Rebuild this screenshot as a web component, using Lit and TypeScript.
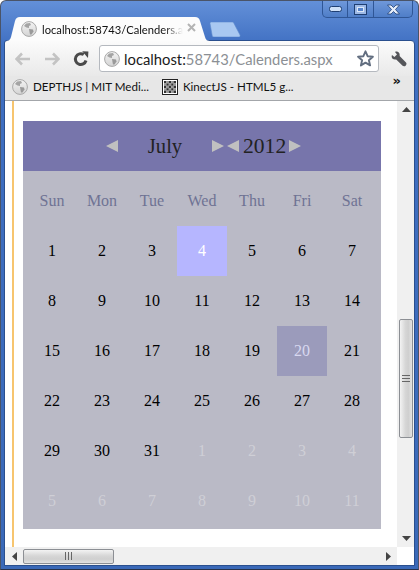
import { LitElement, html, css, svg } from 'lit';
import { customElement } from 'lit/decorators.js';

const globe = (size: number) => html`
  <svg class="globe" width=${size} height=${size} viewBox="0 0 16 16">
    <defs>
      <linearGradient id="gl" x1="0" y1="0" x2="0" y2="1">
        <stop offset="0" stop-color="#f4f4f4" />
        <stop offset="1" stop-color="#d4d4d4" />
      </linearGradient>
    </defs>
    <circle cx="8" cy="8" r="7.4" fill="url(#gl)" stroke="#a9a9a9" stroke-width="1" />
    <path d="M5 2.5 L9 2 L10 4 L8 5 L8 7 L5.5 6.5 L3 5 Z" fill="#a4a4a4" />
    <path d="M8 8 L12 8.5 L12.5 10.5 L10.5 13.5 L9 13.5 L8.5 11 Z" fill="#9a9a9a" />
  </svg>
`;

const triangle = (dir: 'l' | 'r') => html`
  <svg class="tri" width="12" height="12" viewBox="0 0 12 12">
    <path d=${dir === 'l' ? 'M0 6 L12 0 L12 12 Z' : 'M12 6 L0 0 L0 12 Z'} fill="#c0c0c0" />
  </svg>
`;

const arrow = (dir: 'l' | 'r') => html`
  <svg width="16" height="14" viewBox="0 0 16 14">
    <path
      d=${dir === 'l' ? 'M7 1.5 L1.5 7 L7 12.5 M2 7 L15 7' : 'M9 1.5 L14.5 7 L9 12.5 M14 7 L1 7'}
      fill="none"
      stroke="#c3c3c3"
      stroke-width="2.6"
    />
  </svg>
`;

interface Day {
  n: number;
  cls?: string;
}

const days: Day[] = [];
for (let i = 1; i <= 31; i++) {
  days.push({ n: i, cls: i === 4 ? 'today' : i === 20 ? 'picked' : '' });
}
for (let i = 1; i <= 11; i++) days.push({ n: i, cls: 'other' });

const names = ['Sun', 'Mon', 'Tue', 'Wed', 'Thu', 'Fri', 'Sat'];

@customElement('app-root')
export class AppRoot extends LitElement {
  static styles = css`
    :host {
      display: block;
      width: 419px;
      height: 570px;
      overflow: hidden;
    }
    .frame {
      box-sizing: border-box;
      width: 419px;
      height: 570px;
      display: flex;
      flex-direction: column;
      padding: 0 4px 4px 4px;
      border: 1px solid #4a5468;
      border-bottom-color: #27324a;
      border-radius: 6px 6px 0 0;
      background: linear-gradient(#6390d8 0, #3f6fc2 45px, #3a69b8 100%);
      font-family: 'Lato', 'Noto Sans', sans-serif;
    }
    .titlebar {
      height: 40px;
      margin: 0 -4px 0 -4px;
      display: flex;
      align-items: flex-end;
      padding-left: 4px;
      position: relative;
      flex: none;
    }
    .tab {
      position: relative;
      width: 206px;
      height: 24px;
      display: flex;
      align-items: center;
      padding-left: 10px;
      box-sizing: border-box;
      gap: 5px;
    }
    .tab-shape {
      position: absolute;
      left: 0;
      top: 0;
    }
    .tab .globe {
      position: relative;
      margin-left: 6px;
      flex: none;
    }
    .tab-label {
      position: relative;
      font-size: 11.2px;
      color: #111;
      width: 141px;
      flex: none;
      white-space: nowrap;
      overflow: hidden;
      -webkit-mask-image: linear-gradient(90deg, #000 122px, transparent 141px);
      mask-image: linear-gradient(90deg, #000 122px, transparent 141px);
    }
    .tab-close {
      position: absolute;
      left: 182px;
      top: 6px;
    }
    .newtab {
      margin: 0 0 4px -2px;
      flex: none;
    }
    .winbtns {
      position: absolute;
      top: 0;
      left: 321px;
      width: 91px;
      height: 17px;
      box-sizing: border-box;
      display: flex;
      border: 1px solid #2f5696;
      border-top: 0;
      border-radius: 0 0 5px 5px;
      background: linear-gradient(#6f98da, #4f7ec8);
    }
    .winbtns div {
      display: flex;
      align-items: center;
      justify-content: center;
      border-right: 1px solid #2f5696;
      box-sizing: border-box;
    }
    .winbtns div:last-child {
      border-right: 0;
      flex: 1;
    }
    .panel {
      flex: 1;
      display: flex;
      flex-direction: column;
      min-height: 0;
      background: #fff;
      border-radius: 2px 3px 0 0;
      outline: 1px solid #2a4f8e;
    }
    .toolbar {
      height: 35px;
      flex: none;
      display: flex;
      align-items: center;
      padding-left: 10px;
      background: linear-gradient(#fbfbfb, #e9e9e9);
      box-sizing: border-box;
    }
    .toolbar .nav {
      width: 29px;
      display: flex;
    }
    .omnibox {
      box-sizing: border-box;
      margin-left: -3px;
      width: 280px;
      height: 27px;
      background: #fff;
      border: 1px solid #b5b9bf;
      border-radius: 3px;
      display: flex;
      align-items: center;
      padding-left: 4px;
      gap: 4px;
      font-size: 14.8px;
      white-space: nowrap;
      position: relative;
    }
    .omnibox b {
      font-weight: 400;
      color: #1a1a1a;
    }
    .omnibox span {
      color: #8b8f94;
    }
    .star {
      position: absolute;
      right: 4px;
      top: 4px;
    }
    .wrench {
      margin-left: 12px;
    }
    .bookmarks {
      height: 25px;
      flex: none;
      display: flex;
      align-items: center;
      background: #e7e7e7;
      border-bottom: 1px solid #a3a6aa;
      box-sizing: border-box;
      font-size: 11.6px;
      color: #111;
      padding: 0 0 3px 7px;
      white-space: nowrap;
      position: relative;
    }
    .mark {
      display: flex;
      align-items: center;
      gap: 5px;
    }
    .mark + .mark {
      margin-left: 13px;
    }
    .chev {
      position: absolute;
      right: 13px;
      top: 0;
      font-size: 13px;
      font-weight: 700;
      font-family: 'DejaVu Sans', sans-serif;
      line-height: 10px;
    }
    .page {
      flex: 1;
      display: flex;
      min-height: 0;
    }
    .content {
      width: 392px;
      flex: none;
      padding-left: 7px;
      box-sizing: border-box;
      display: flex;
      overflow: hidden;
    }
    .rule {
      width: 2px;
      flex: none;
      background: #f7c56f;
    }
    .calendar {
      margin: 20px 0 0 9px;
      width: 358px;
      height: 408px;
      flex: none;
      background: #babac6;
      font-family: 'Liberation Serif', serif;
    }
    .cal-head {
      height: 50px;
      background: #7775ab;
      display: flex;
      align-items: center;
      padding-left: 83px;
      color: #222;
      font-size: 21.6px;
    }
    .month {
      width: 94px;
      text-align: center;
      font-size: 20.6px;
    }
    .year {
      padding: 0 3px 0 4px;
    }
    .tri {
      flex: none;
    }
    .tri + .tri {
      margin-left: 3px;
    }
    .grid {
      display: grid;
      grid-template-columns: repeat(7, 50px);
      grid-template-rows: 55px;
      grid-auto-rows: 50px;
      padding: 0 4px;
      font-size: 16px;
      color: #000;
    }
    .grid > div {
      display: flex;
      align-items: center;
      justify-content: center;
    }
    .grid .dow {
      color: #6f7394;
      padding-top: 5px;
      box-sizing: border-box;
    }
    .today {
      background: #b6b6ff;
      color: #fff;
    }
    .picked {
      background: #9b9bbb;
      color: #d8d8f0;
    }
    .other {
      color: #cfcfd6;
    }
    .vscroll {
      width: 18px;
      flex: none;
      background: #f0f0f0;
      display: flex;
      flex-direction: column;
      align-items: center;
    }
    .sb-arrow {
      height: 17px;
      flex: none;
      display: flex;
      align-items: center;
      justify-content: center;
    }
    .vthumb {
      margin-top: 201px;
      width: 14px;
      height: 119px;
      box-sizing: border-box;
      border: 1px solid #8c8f94;
      border-radius: 2px;
      background: linear-gradient(90deg, #f3f3f3, #d6d6d6 45%, #cfcfcf 70%, #e2e2e2);
      display: flex;
      align-items: center;
      justify-content: center;
    }
    .vspace {
      flex: 1;
    }
    .hscroll {
      height: 18px;
      flex: none;
      display: flex;
      background: #fff;
    }
    .htrack {
      width: 392px;
      display: flex;
      align-items: center;
      background: #f0f0f0;
    }
    .htrack .sb-arrow {
      width: 18px;
    }
    .hthumb {
      width: 91px;
      height: 15px;
      box-sizing: border-box;
      border: 1px solid #8c8f94;
      border-radius: 2px;
      background: linear-gradient(#f3f3f3, #d6d6d6 45%, #cfcfcf 70%, #e2e2e2);
      display: flex;
      align-items: center;
      justify-content: center;
    }
    .grip {
      display: block;
    }
    .htrack .end {
      margin-left: auto;
    }
  `;

  render() {
    return html`
      <div class="frame">
        <div class="titlebar">
          <div class="tab">
            <svg class="tab-shape" width="206" height="24" viewBox="0 0 206 24">
              <path
                d="M0 24 C4 24 5 23 6 20 L10 4 C11 1 12 0 15 0 L190 0 C193 0 194 1 195 4 L200 20 C201 23 202 24 206 24 Z"
                fill="#fcfcfc"
              />
            </svg>
            ${globe(16)}
            <div class="tab-label">localhost:58743/Calenders.aspx</div>
            <svg class="tab-close" width="9" height="9" viewBox="0 0 9 9">
              <path d="M1 1 L8 8 M8 1 L1 8" stroke="#b4b4b4" stroke-width="2" />
            </svg>
          </div>
          <svg class="newtab" width="32" height="15" viewBox="0 0 32 15">
            <path
              d="M1 1.5 C1 .5 1.5 0 2.5 0 L23 0 C24 0 24.7 .5 25 1.5 L31 13 C31.3 14 31 15 30 15 L5 15 C4 15 3.5 14.5 3.2 13.5 Z"
              fill="#a9c8f1"
              stroke="#5f8ccc"
              stroke-width=".6"
            />
          </svg>
          <div class="winbtns">
            <div style="width:25px">
              <svg width="13" height="6" viewBox="0 0 13 6">
                <rect x=".5" y=".5" width="12" height="5" rx="2" fill="#cfe0f7" stroke="#1f3f73" />
              </svg>
            </div>
            <div style="width:26px">
              <svg width="13" height="11" viewBox="0 0 13 11">
                <rect x=".5" y=".5" width="12" height="10" fill="#9db9e6" stroke="#1f3f73" />
                <rect x="3.5" y="3.5" width="6" height="4" fill="#5583cc" stroke="#dbe7f8" />
              </svg>
            </div>
            <div>
              <svg width="15" height="11" viewBox="0 0 15 11">
                <path
                  d="M1.5 1 L5 1 L7.5 3.5 L10 1 L13.5 1 L9.5 5.5 L13.5 10 L10 10 L7.5 7.5 L5 10 L1.5 10 L5.5 5.5 Z"
                  fill="#e6eefa"
                  stroke="#1f3f73"
                  stroke-width=".8"
                />
              </svg>
            </div>
          </div>
        </div>
        <div class="panel">
          <div class="toolbar">
            <div class="nav">${arrow('l')}</div>
            <div class="nav">${arrow('r')}</div>
            <div class="nav">
              <svg width="16" height="16" viewBox="0 0 16 16">
                <path
                  d="M13 9.5 A5.4 5.4 0 1 1 10.8 3.6"
                  fill="none"
                  stroke="#4a4a4a"
                  stroke-width="3"
                />
                <path d="M9.2 .2 L15.4 .6 L15 7 Z" fill="#4a4a4a" />
              </svg>
            </div>
            <div class="omnibox">
              ${globe(16)}
              <div><b>localhost:</b><span>58743/Calenders.aspx</span></div>
              <svg class="star" width="17" height="17" viewBox="0 0 17 17">
                <path
                  d="M8.5 1.3 L10.6 6.2 L15.9 6.7 L11.9 10.2 L13.1 15.4 L8.5 12.6 L3.9 15.4 L5.1 10.2 L1.1 6.7 L6.4 6.2 Z"
                  fill="#fff"
                  stroke="#626e80"
                  stroke-width="1.9"
                  stroke-linejoin="round"
                />
              </svg>
            </div>
            <svg class="wrench" width="16" height="16" viewBox="0 0 16 16">
              <path
                d="M1 4 L3.4 6 L6 3.4 L4 1 C6.5 -.4 9.3 1.8 8.6 5 L15 11.4 C15.8 12.4 15.6 13.4 14.8 14.4 C14 15.4 12.6 15.6 11.6 14.8 L5.2 8.4 C2 9.2 -.2 6.6 1 4 Z"
                fill="#55565a"
              />
            </svg>
          </div>
          <div class="bookmarks">
            <div class="mark">${globe(16)}<span>DEPTHJS | MIT Medi...</span></div>
            <div class="mark">
              <svg width="16" height="16" viewBox="0 0 16 16">
                <rect x=".5" y=".5" width="15" height="15" fill="#fff" stroke="#222" />
                ${[0, 1, 2, 3, 4].map((r) =>
                  [0, 1, 2, 3, 4].map((c) =>
                    (r + c) % 2 === 0
                      ? svg`<rect x=${2 + c * 2.4} y=${2 + r * 2.4} width="2.4" height="2.4" fill="#333" />`
                      : svg`<rect x=${2 + c * 2.4} y=${2 + r * 2.4} width="2.4" height="2.4" fill="#999" />`
                  )
                )}
              </svg>
              <span>KinectJS - HTML5 g...</span>
            </div>
            <div class="chev">»</div>
          </div>
          <div class="page">
            <div class="content">
              <div class="rule"></div>
              <div class="calendar">
                <div class="cal-head">
                  ${triangle('l')}
                  <div class="month">July</div>
                  ${triangle('r')}${triangle('l')}
                  <div class="year">2012</div>
                  ${triangle('r')}
                </div>
                <div class="grid">
                  ${names.map((n) => html`<div class="dow">${n}</div>`)}
                  ${days.map((d) => html`<div class=${d.cls ?? ''}>${d.n}</div>`)}
                </div>
              </div>
            </div>
            <div class="vscroll">
              <div class="sb-arrow">
                <svg width="9" height="5" viewBox="0 0 9 5"><path d="M4.5 0 L9 5 L0 5 Z" fill="#444" /></svg>
              </div>
              <div class="vthumb">
                <svg class="grip" width="8" height="7" viewBox="0 0 8 7">
                  <path d="M0 .5 H8 M0 3.5 H8 M0 6.5 H8" stroke="#666" />
                </svg>
              </div>
              <div class="vspace"></div>
              <div class="sb-arrow">
                <svg width="9" height="5" viewBox="0 0 9 5"><path d="M4.5 5 L9 0 L0 0 Z" fill="#444" /></svg>
              </div>
            </div>
          </div>
          <div class="hscroll">
            <div class="htrack">
              <div class="sb-arrow">
                <svg width="5" height="9" viewBox="0 0 5 9"><path d="M0 4.5 L5 0 L5 9 Z" fill="#444" /></svg>
              </div>
              <div class="hthumb">
                <svg class="grip" width="7" height="8" viewBox="0 0 7 8">
                  <path d="M.5 0 V8 M3.5 0 V8 M6.5 0 V8" stroke="#666" />
                </svg>
              </div>
              <div class="sb-arrow end">
                <svg width="5" height="9" viewBox="0 0 5 9"><path d="M5 4.5 L0 0 L0 9 Z" fill="#444" /></svg>
              </div>
            </div>
          </div>
        </div>
      </div>
    `;
  }
}
